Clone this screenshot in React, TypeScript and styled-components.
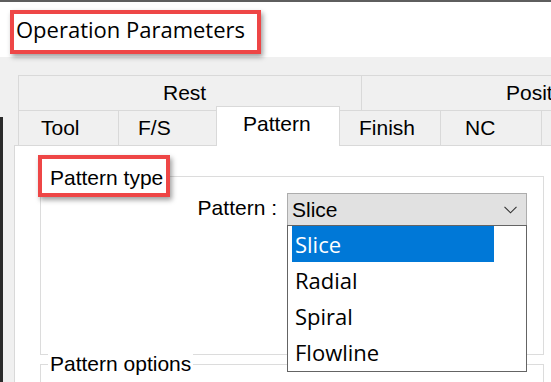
import React from "react";
import styled, { createGlobalStyle } from "styled-components";

const Global = createGlobalStyle`
  html, body { margin: 0; padding: 0; background: #ffffff; }
  body { width: 551px; height: 382px; overflow: hidden; }
  * { box-sizing: border-box; }
`;

const Window = styled.div`
  width: 551px;
  height: 382px;
  overflow: hidden;
  display: flex;
  flex-direction: column;
  border-top: 2px solid #5e5e5e;
  background: #f0f0f0;
`;

const Header = styled.header`
  flex: none;
  height: 55px;
  background: #ffffff;
  padding: 8px 0 0 10px;
`;

const Highlight = styled.div`
  border: 4px solid #ee4646;
  box-shadow: 2px 3px 5px rgba(0, 0, 0, 0.38);
  background: #ffffff;
`;

const TitleBox = styled(Highlight)`
  display: inline-block;
  height: 44px;
  padding: 0 12px 0 2px;
  font-family: "Open Sans", "Noto Sans", sans-serif;
  font-size: 22px;
  line-height: 31px;
  color: #000000;
  white-space: nowrap;
`;

const Body = styled.div`
  flex: 1;
  display: flex;
  min-height: 0;
`;

const Edge = styled.div`
  flex: none;
  width: 3px;
  background: linear-gradient(to bottom, #f0f0f0 0, #f0f0f0 60px, #2b2b2b 60px);
`;

const Content = styled.div`
  flex: 1;
  margin-left: 11px;
  padding-top: 18px;
  display: flex;
  flex-direction: column;
  min-width: 0;
`;

const TabStrip = styled.div`
  margin-left: 4px;
  display: flex;
  flex-direction: column;
`;

const TabRow = styled.div`
  display: flex;
  align-items: flex-end;
  height: 35px;
`;

const Tab = styled.div<{ $w: number; $pad: number; $active?: boolean }>`
  flex: none;
  width: ${(p) => p.$w}px;
  height: ${(p) => (p.$active ? 40 : 35)}px;
  margin-right: -1px;
  margin-bottom: ${(p) => (p.$active ? -1 : 0)}px;
  position: relative;
  z-index: ${(p) => (p.$active ? 2 : 0)};
  padding-left: ${(p) => p.$pad}px;
  border: 1px solid #d9d9d9;
  border-bottom: none;
  background: ${(p) => (p.$active ? "#ffffff" : "#f0f0f0")};
  font-family: "Liberation Sans", Arial, sans-serif;
  font-size: 21px;
  line-height: 34px;
  color: #000000;
  white-space: nowrap;
`;

const Panel = styled.div`
  flex: 1;
  background: #ffffff;
  border-top: 1px solid #d9d9d9;
  border-left: 1px solid #d9d9d9;
  padding: 9px 0 0 25px;
`;

const Group = styled.fieldset<{ $h: number }>`
  margin: 0;
  padding: 0;
  width: 504px;
  height: ${(p) => p.$h}px;
  border: 1px solid #dcdcdc;
  min-inline-size: 0;
  & + & {
    margin-top: -3px;
  }
`;

const PlainLegend = styled.legend`
  margin-left: 7px;
  padding: 0 2px;
  background: #ffffff;
  font-family: "Liberation Sans", Arial, sans-serif;
  font-size: 21px;
  line-height: 24px;
  color: #000000;
`;

const MarkedLegend = styled.legend`
  margin-left: -3px;
  padding: 0;
`;

const LegendBox = styled(Highlight)`
  height: 42px;
  padding: 3px 3px 0 8px;
  font-family: "Liberation Sans", Arial, sans-serif;
  font-size: 21px;
  line-height: 31px;
  color: #000000;
  white-space: nowrap;
`;

const FieldRow = styled.div`
  display: flex;
  justify-content: flex-end;
  align-items: flex-start;
  gap: 10px;
  margin-top: -4px;
  padding-right: 16px;
`;

const FieldLabel = styled.span`
  margin-top: 3px;
  font-family: "Liberation Sans", Arial, sans-serif;
  font-size: 21px;
  line-height: 24px;
  color: #000000;
`;

const Combo = styled.div`
  position: relative;
  width: 240px;
  height: 33px;
  display: flex;
  align-items: center;
  justify-content: space-between;
  padding: 0 9px 0 4px;
  border: 1px solid #adadad;
  background: #e1e1e1;
  font-family: "Liberation Sans", Arial, sans-serif;
  font-size: 21px;
  line-height: 31px;
  color: #000000;
`;

const Chevron = styled.svg`
  flex: none;
  display: block;
`;

const DropList = styled.ul`
  position: absolute;
  top: 100%;
  left: -1px;
  width: 240px;
  height: 147px;
  margin: 0;
  padding: 0 4px;
  list-style: none;
  background: #ffffff;
  border: 1px solid #646464;
  z-index: 3;
`;

const Option = styled.li<{ $selected?: boolean }>`
  width: 202px;
  height: 36px;
  padding-left: 3px;
  font-family: "Open Sans", "Noto Sans", sans-serif;
  font-size: 22px;
  line-height: 36px;
  color: ${(p) => (p.$selected ? "#ffffff" : "#000000")};
  background: ${(p) => (p.$selected ? "#0078d7" : "transparent")};
  white-space: nowrap;
`;

const topTabs = [
  { label: "Rest", w: 344, pad: 144 },
  { label: "Position", w: 361, pad: 144 },
];

const bottomTabs = [
  { label: "Tool", w: 101, pad: 22 },
  { label: "F/S", w: 99, pad: 19 },
  { label: "Pattern", w: 124, pad: 26, active: true },
  { label: "Finish", w: 102, pad: 19 },
  { label: "NC", w: 102, pad: 24 },
  { label: "Stock", w: 100, pad: 20 },
];

const options = ["Slice", "Radial", "Spiral", "Flowline"];

export default function App() {
  return (
    <>
      <Global />
      <Window>
        <Header>
          <TitleBox>Operation Parameters</TitleBox>
        </Header>
        <Body>
          <Edge />
          <Content>
            <TabStrip>
              <TabRow>
                {topTabs.map((t) => (
                  <Tab key={t.label} $w={t.w} $pad={t.pad}>
                    {t.label}
                  </Tab>
                ))}
              </TabRow>
              <TabRow>
                {bottomTabs.map((t) => (
                  <Tab key={t.label} $w={t.w} $pad={t.pad} $active={t.active}>
                    {t.label}
                  </Tab>
                ))}
              </TabRow>
            </TabStrip>
            <Panel>
              <Group $h={200}>
                <MarkedLegend>
                  <LegendBox>Pattern type</LegendBox>
                </MarkedLegend>
                <FieldRow>
                  <FieldLabel>Pattern :</FieldLabel>
                  <Combo>
                    <span>Slice</span>
                    <Chevron width="13" height="8" viewBox="0 0 13 8">
                      <polyline
                        points="0.5,0.8 6.5,6.8 12.5,0.8"
                        fill="none"
                        stroke="#333333"
                        strokeWidth="1.1"
                      />
                    </Chevron>
                    <DropList>
                      {options.map((o, i) => (
                        <Option key={o} $selected={i === 0}>
                          {o}
                        </Option>
                      ))}
                    </DropList>
                  </Combo>
                </FieldRow>
              </Group>
              <Group $h={120}>
                <PlainLegend>Pattern options</PlainLegend>
              </Group>
            </Panel>
          </Content>
        </Body>
      </Window>
    </>
  );
}
